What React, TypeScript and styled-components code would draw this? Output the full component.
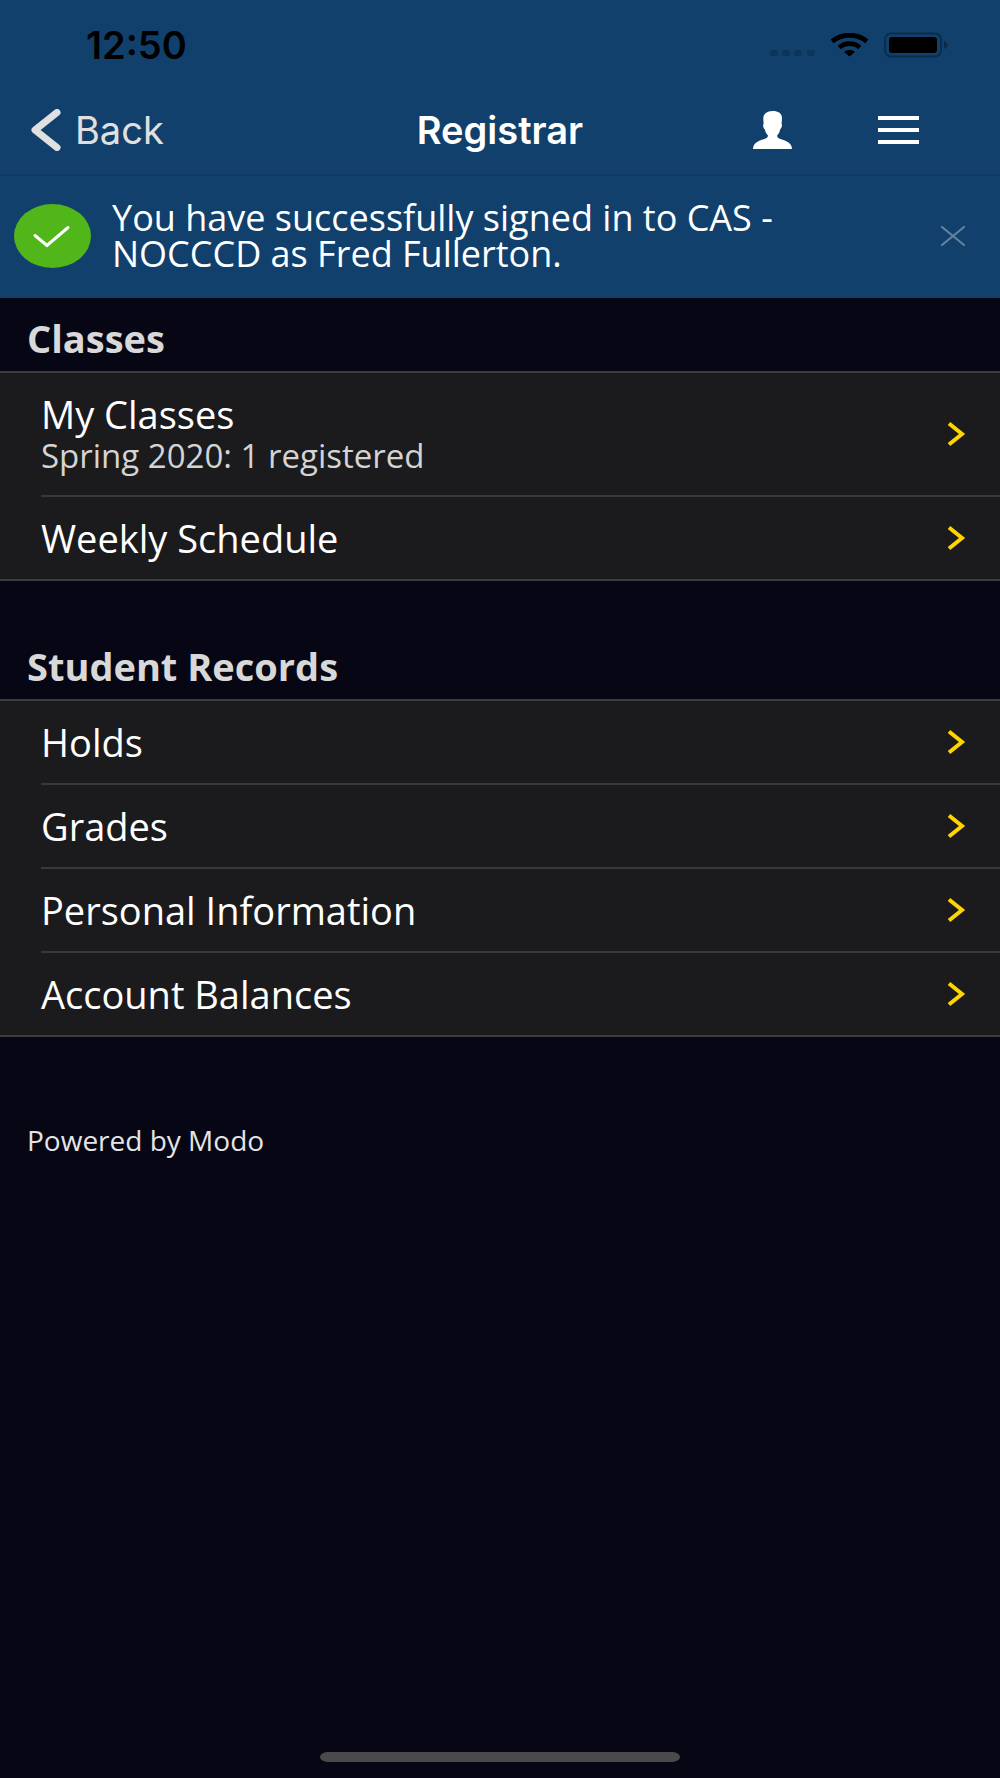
import React from "react";
import styled, { createGlobalStyle } from "styled-components";

const GlobalStyle = createGlobalStyle`
  *, *::before, *::after { box-sizing: border-box; }
  body {
    margin: 0;
    background: #070614;
    color: #ffffff;
    font-family: "Open Sans", "Noto Sans", sans-serif;
  }
  h1, h2, p, ul { margin: 0; padding: 0; }
  svg { display: block; flex: none; }
`;

const Screen = styled.div`
  display: flex;
  flex-direction: column;
  min-height: 100vh;
`;

const Header = styled.header`
  background: #10406b;
  font-family: Inter, "Liberation Sans", sans-serif;
`;

const StatusBar = styled.div`
  display: flex;
  align-items: center;
  justify-content: space-between;
  height: 90px;
  padding: 0 52px 0 86px;
  color: #000000;
`;

const Clock = styled.time`
  font-size: 38px;
  line-height: 44px;
  font-weight: 600;
`;

const StatusIcons = styled.div`
  display: flex;
  align-items: center;
  gap: 15px;
`;

const NavBar = styled.nav`
  display: grid;
  grid-template-columns: 1fr auto 1fr;
  align-items: center;
  height: 86px;
  padding: 0 31px 4px;
  border-bottom: 2px solid #0f3a62;
`;

const BackLink = styled.a`
  display: flex;
  align-items: center;
  gap: 14px;
  color: #e0e0e0;
  font-size: 38px;
  line-height: 44px;
  text-decoration: none;
`;

const Title = styled.h1`
  font-size: 38px;
  line-height: 44px;
  font-weight: 600;
`;

const NavActions = styled.div`
  display: flex;
  align-items: center;
  justify-content: flex-end;
  gap: 86px;
  padding-right: 50px;
`;

const IconButton = styled.button`
  padding: 0;
  border: 0;
  background: none;
  color: inherit;
  cursor: pointer;
`;

const Banner = styled.section`
  display: flex;
  align-items: center;
  gap: 21px;
  padding: 24px 34px 26px 14px;
  background: #10406b;
`;

const BannerText = styled.p`
  flex: 1;
  max-width: 700px;
  font-size: 36px;
  line-height: 36px;
`;

const BannerClose = styled(IconButton)`
  margin-left: auto;
  color: #64829d;
`;

const Section = styled.section`
  padding-bottom: 45px;
`;

const SectionTitle = styled.h2`
  padding: 18px 27px 11px;
  color: #d8d8d8;
  font-size: 38px;
  line-height: 44px;
  font-weight: 700;
`;

const List = styled.ul`
  list-style: none;
  background: #1b1b1d;
  border-top: 2px solid #3b3b3d;
  border-bottom: 2px solid #3b3b3d;
`;

const Item = styled.li`
  padding-left: 41px;
`;

const ItemLink = styled.a<{ $divided: boolean }>`
  display: flex;
  align-items: center;
  justify-content: space-between;
  padding: 19px 34px 19px 0;
  border-top: ${(p) => (p.$divided ? "2px solid #39393b" : "0")};
  color: #ffffff;
  text-decoration: none;
`;

const ItemLabel = styled.span`
  display: block;
  font-size: 38px;
  line-height: 44px;
`;

const ItemDetail = styled.span`
  display: block;
  color: #d4d4d4;
  font-size: 33px;
  line-height: 40px;
`;

const Footer = styled.footer`
  padding: 38px 27px;
  color: #e4e4e4;
  font-size: 28px;
  line-height: 40px;
`;

const HomeIndicator = styled.div`
  width: 36%;
  height: 10px;
  margin: auto auto 16px;
  border-radius: 8px / 5px;
  background: #4a4a4a;
`;

const SignalIcon = () => (
  <svg width="45" height="24" viewBox="0 0 45 24" fill="#0d355a" aria-hidden="true">
    {[0, 12, 24, 37].map((x) => (
      <rect key={x} x={x} y="17" width="8" height="6" rx="2.5" />
    ))}
  </svg>
);

const WifiIcon = () => (
  <svg width="39" height="24" viewBox="0 0 39 24" fill="none" stroke="#000" aria-hidden="true">
    <path d="M2.2 8.3C11.8.2 27.2.2 36.8 8.3" strokeWidth="4.8" />
    <path d="M9.2 14.4C15 9.3 24 9.3 29.8 14.4" strokeWidth="4.6" />
    <path d="M14 18.9C17 16.3 22 16.3 25 18.9L19.5 23.5Z" fill="#000" stroke="none" />
  </svg>
);

const BatteryIcon = () => (
  <svg width="64" height="26" viewBox="0 0 64 26" aria-hidden="true">
    <rect x="1" y="1.5" width="56" height="23" rx="6" fill="none" stroke="#0b2c4b" strokeWidth="1.8" />
    <rect x="5" y="5" width="48" height="16" rx="3" fill="#000" />
    <path d="M60 9C64.8 10.4 64.8 15.6 60 17Z" fill="#0b2c4b" />
  </svg>
);

const BackIcon = () => (
  <svg width="30" height="42" viewBox="0 0 30 42" fill="none" aria-hidden="true">
    <path d="M26 3.5L4 21L26 38.5" stroke="currentColor" strokeWidth="7" strokeLinecap="round" strokeLinejoin="round" />
  </svg>
);

const PersonIcon = () => (
  <svg width="39" height="38" viewBox="0 0 39 38" fill="#fff" aria-hidden="true">
    <path d="M19.5 0C14 .2 10.4 2.6 10.3 7.5L10.6 13C9.6 13.8 10.3 17.5 11.8 18.2C12.3 21.2 13.6 23 14.9 24.3C15 26.5 13.6 27.1 11.5 27.9C5.5 29.9 0 32 0 38H39C39 32 33.5 29.9 27.5 27.9C25.4 27.1 24 26.5 24.2 24.3C25.5 23 26.8 21.2 27.2 18.2C28.7 17.5 29.4 13.8 28.6 13L29 7.5C29.2 2.6 25.5 0 19.5 0Z" />
  </svg>
);

const MenuIcon = () => (
  <svg width="41" height="28" viewBox="0 0 41 28" fill="#fff" aria-hidden="true">
    <rect width="41" height="4" />
    <rect y="12" width="41" height="4" />
    <rect y="24" width="41" height="4" />
  </svg>
);

const SuccessIcon = () => (
  <svg width="77" height="64" viewBox="0 0 77 64" fill="none" aria-hidden="true">
    <ellipse cx="38.5" cy="32" rx="38.5" ry="32" fill="#50b61a" />
    <path d="M21 31.5L33 41.5L54 23.5" stroke="#fff" strokeWidth="3" strokeLinecap="round" />
  </svg>
);

const CloseIcon = () => (
  <svg width="26" height="22" viewBox="0 0 26 22" fill="none" aria-hidden="true">
    <path d="M2 2L24 20M24 2L2 20" stroke="currentColor" strokeWidth="2.2" strokeLinecap="round" />
  </svg>
);

const ChevronIcon = () => (
  <svg width="19" height="26" viewBox="0 0 19 26" fill="none" aria-hidden="true">
    <path d="M2 2.5L15 13L2 23.5" stroke="#ffd500" strokeWidth="4" />
  </svg>
);

type Entry = { label: string; detail?: string };

const sections: { title: string; entries: Entry[] }[] = [
  {
    title: "Classes",
    entries: [
      { label: "My Classes", detail: "Spring 2020: 1 registered" },
      { label: "Weekly Schedule" },
    ],
  },
  {
    title: "Student Records",
    entries: [
      { label: "Holds" },
      { label: "Grades" },
      { label: "Personal Information" },
      { label: "Account Balances" },
    ],
  },
];

export default function App() {
  return (
    <Screen>
      <GlobalStyle />
      <Header>
        <StatusBar>
          <Clock>12:50</Clock>
          <StatusIcons>
            <SignalIcon />
            <WifiIcon />
            <BatteryIcon />
          </StatusIcons>
        </StatusBar>
        <NavBar>
          <BackLink href="#back">
            <BackIcon />
            Back
          </BackLink>
          <Title>Registrar</Title>
          <NavActions>
            <IconButton type="button" aria-label="Account">
              <PersonIcon />
            </IconButton>
            <IconButton type="button" aria-label="Menu">
              <MenuIcon />
            </IconButton>
          </NavActions>
        </NavBar>
      </Header>
      <Banner role="status">
        <SuccessIcon />
        <BannerText>
          You have successfully signed in to CAS - NOCCCD as Fred Fullerton.
        </BannerText>
        <BannerClose type="button" aria-label="Dismiss">
          <CloseIcon />
        </BannerClose>
      </Banner>
      <main>
        {sections.map((section) => (
          <Section key={section.title}>
            <SectionTitle>{section.title}</SectionTitle>
            <List>
              {section.entries.map((entry, index) => (
                <Item key={entry.label}>
                  <ItemLink href="#" $divided={index > 0}>
                    <span>
                      <ItemLabel>{entry.label}</ItemLabel>
                      {entry.detail && <ItemDetail>{entry.detail}</ItemDetail>}
                    </span>
                    <ChevronIcon />
                  </ItemLink>
                </Item>
              ))}
            </List>
          </Section>
        ))}
      </main>
      <Footer>Powered by Modo</Footer>
      <HomeIndicator />
    </Screen>
  );
}
